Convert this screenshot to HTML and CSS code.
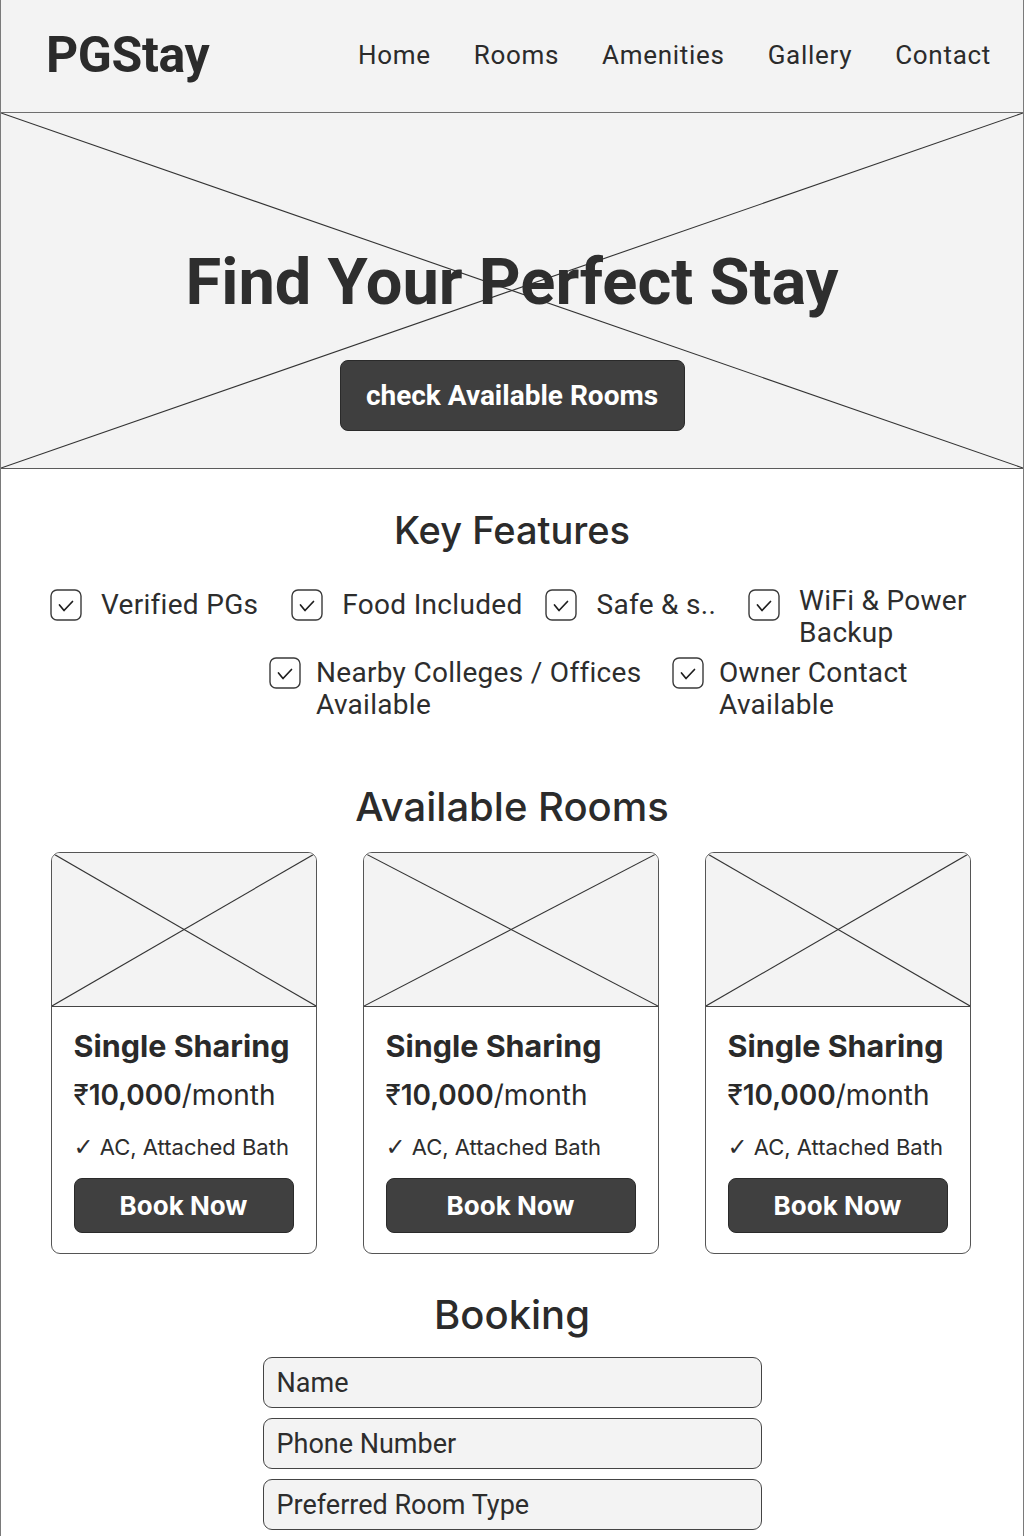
FILE: index.html
```html
<!DOCTYPE html>
<html lang="en">
<head>
<meta charset="utf-8">
<title>PGStay</title>
<link rel="stylesheet" href="styles.css">
</head>
<body>
<div class="page">
  <header class="topbar">
    <div class="logo">PGStay</div>
    <nav class="nav">
      <a href="#">Home</a>
      <a href="#">Rooms</a>
      <a href="#">Amenities</a>
      <a href="#">Gallery</a>
      <a href="#">Contact</a>
    </nav>
  </header>

  <section class="hero">
    <svg class="xlines" viewBox="0 0 100 100" preserveAspectRatio="none" aria-hidden="true">
      <line x1="0" y1="0" x2="100" y2="100"/>
      <line x1="100" y1="0" x2="0" y2="100"/>
    </svg>
    <h1 class="hero-title">Find Your Perfect Stay</h1>
    <a class="hero-btn" href="#">check Available Rooms</a>
  </section>

  <section class="features">
    <h2 class="section-title kf">Key Features</h2>
    <div class="feat-row row1">
      <div class="feat f-verified"><svg class="cb" viewBox="0 0 32 32"><rect x="1" y="1" width="30" height="30" rx="6"/><path d="M9.5 16 L14 21.5 L22.5 12.5"/></svg><span class="ft">Verified PGs</span></div>
      <div class="feat f-food"><svg class="cb" viewBox="0 0 32 32"><rect x="1" y="1" width="30" height="30" rx="6"/><path d="M9.5 16 L14 21.5 L22.5 12.5"/></svg><span class="ft">Food Included</span></div>
      <div class="feat f-safe"><svg class="cb" viewBox="0 0 32 32"><rect x="1" y="1" width="30" height="30" rx="6"/><path d="M9.5 16 L14 21.5 L22.5 12.5"/></svg><span class="ft">Safe &amp; s..</span></div>
      <div class="feat"><svg class="cb" viewBox="0 0 32 32"><rect x="1" y="1" width="30" height="30" rx="6"/><path d="M9.5 16 L14 21.5 L22.5 12.5"/></svg><span class="ft ft-wifi">WiFi &amp; Power Backup</span></div>
    </div>
    <div class="feat-row row2">
      <div class="feat tight"><svg class="cb" viewBox="0 0 32 32"><rect x="1" y="1" width="30" height="30" rx="6"/><path d="M9.5 16 L14 21.5 L22.5 12.5"/></svg><span class="ft ft-near">Nearby Colleges / Offices Available</span></div>
      <div class="feat tight"><svg class="cb" viewBox="0 0 32 32"><rect x="1" y="1" width="30" height="30" rx="6"/><path d="M9.5 16 L14 21.5 L22.5 12.5"/></svg><span class="ft ft-owner">Owner Contact Available</span></div>
    </div>
  </section>

  <section class="rooms">
    <h2 class="section-title">Available Rooms</h2>
    <div class="cards">
      <article class="card">
        <div class="card-img"><svg class="xlines" viewBox="0 0 100 100" preserveAspectRatio="none" aria-hidden="true"><line x1="0" y1="0" x2="100" y2="100"/><line x1="100" y1="0" x2="0" y2="100"/></svg></div>
        <div class="card-body">
          <h3 class="card-title">Single Sharing</h3>
          <p class="price">₹<b>10,000</b>/month</p>
          <p class="amen"><span class="tick">✓</span> AC, Attached Bath</p>
          <a class="book-btn" href="#">Book Now</a>
        </div>
      </article>
      <article class="card">
        <div class="card-img"><svg class="xlines" viewBox="0 0 100 100" preserveAspectRatio="none" aria-hidden="true"><line x1="0" y1="0" x2="100" y2="100"/><line x1="100" y1="0" x2="0" y2="100"/></svg></div>
        <div class="card-body">
          <h3 class="card-title">Single Sharing</h3>
          <p class="price">₹<b>10,000</b>/month</p>
          <p class="amen"><span class="tick">✓</span> AC, Attached Bath</p>
          <a class="book-btn" href="#">Book Now</a>
        </div>
      </article>
      <article class="card">
        <div class="card-img"><svg class="xlines" viewBox="0 0 100 100" preserveAspectRatio="none" aria-hidden="true"><line x1="0" y1="0" x2="100" y2="100"/><line x1="100" y1="0" x2="0" y2="100"/></svg></div>
        <div class="card-body">
          <h3 class="card-title">Single Sharing</h3>
          <p class="price">₹<b>10,000</b>/month</p>
          <p class="amen"><span class="tick">✓</span> AC, Attached Bath</p>
          <a class="book-btn" href="#">Book Now</a>
        </div>
      </article>
    </div>
  </section>

  <section class="booking">
    <h2 class="section-title">Booking</h2>
    <form class="form">
      <input class="field" type="text" placeholder="Name">
      <input class="field" type="text" placeholder="Phone Number">
      <input class="field" type="text" placeholder="Preferred Room Type">
    </form>
  </section>
</div>
</body>
</html>
```

FILE: styles.css
```css
* { box-sizing: border-box; }
html, body { margin: 0; padding: 0; background: #fff; }
body {
  font-family: Roboto, "Liberation Sans", Arial, sans-serif;
  color: #2d2d2d;
}
.page {
  width: 1024px;
  min-height: 1536px;
  border-left: 1.5px solid #7a7a7a;
  border-right: 1.5px solid #7a7a7a;
  background: #fff;
}

/* header */
.topbar {
  height: 113px;
  background: #f3f3f3;
  border-bottom: 1.5px solid #6e6e6e;
  display: flex;
  align-items: center;
  justify-content: space-between;
  padding: 0 32px 2px 45px;
}
.logo {
  font-family: Roboto, "Liberation Sans", sans-serif;
  font-weight: 700;
  font-size: 50px;
  letter-spacing: -0.4px;
  color: #2b2b2b;
}
.nav { display: flex; gap: 43px; }
.nav a {
  font-size: 26px;
  color: #2b2b2b;
  text-decoration: none;
  letter-spacing: 0.7px;
}

/* hero */
.hero {
  position: relative;
  height: 356px;
  background: #f3f3f3;
  border-bottom: 1.5px solid #5a5a5a;
  display: flex;
  flex-direction: column;
  align-items: center;
  padding-top: 129px;
}
.xlines {
  position: absolute;
  inset: 0;
  width: 100%;
  height: 100%;
}
.xlines line {
  stroke: #333;
  stroke-width: 1.1;
  vector-effect: non-scaling-stroke;
}
.hero-title {
  position: relative;
  margin: 0;
  font-size: 65px;
  line-height: 80px;
  font-weight: 700;
  color: #2e2e2e;
}
.hero-btn {
  position: relative;
  margin-top: 38px;
  width: 345px;
  height: 71px;
  background: #3f3f3f;
  border: 1.5px solid #2a2a2a;
  border-radius: 8px;
  color: #fff;
  font-size: 28px;
  font-weight: 700;
  text-decoration: none;
  display: flex;
  align-items: center;
  justify-content: center;
}

/* section titles */
.section-title {
  margin: 0;
  text-align: center;
  font-family: Inter, Roboto, sans-serif;
  font-weight: 500;
  font-size: 40px;
  line-height: 48px;
  color: #2b2b2b;
}
.section-title.kf { font-size: 38px; }

/* features */
.features { padding-top: 37px; }
.feat-row { display: flex; align-items: flex-start; }
.row1 { margin-top: 35px; padding-left: 49px; }
.row2 { margin-top: 8px; padding-left: 268px; gap: 29px; }
.feat { display: flex; align-items: flex-start; gap: 19px; }
.feat.tight { gap: 15px; }
.f-verified { margin-right: 33px; }
.f-food { margin-right: 23px; }
.f-safe { margin-right: 32px; }
.cb {
  width: 32px;
  height: 32px;
  flex: none;
}
.cb rect { fill: #fff; stroke: #3a3a3a; stroke-width: 1.4; }
.cb path { fill: none; stroke: #1e1e1e; stroke-width: 1.7; stroke-linecap: round; stroke-linejoin: round; }
.ft {
  font-size: 28px;
  line-height: 32px;
  letter-spacing: 0.3px;
  color: #2d2d2d;
}
.ft-wifi { width: 180px; margin-top: -4px; }
.ft-near { width: 327px; }
.ft-owner { width: 200px; }

/* rooms */
.rooms { padding-top: 62px; }
.cards {
  display: grid;
  grid-template-columns: 266px 296px 266px;
  gap: 46px;
  padding-left: 49.5px;
  margin-top: 21px;
}
.card {
  border: 1.5px solid #555;
  border-radius: 9px;
  overflow: hidden;
  background: #fff;
}
.card-img {
  position: relative;
  height: 154px;
  background: #f3f3f3;
  border-bottom: 1.5px solid #444;
}
.card-body {
  padding: 21px 22px 20px 22px;
  font-family: Inter, Roboto, sans-serif;
}
.card-title {
  margin: 0;
  font-size: 30.5px;
  line-height: 36px;
  font-weight: 700;
  color: #2a2a2a;
}
.price {
  margin: 14px 0 0;
  font-size: 28px;
  line-height: 34px;
  color: #2a2a2a;
}
.price b { font-weight: 600; }
.amen {
  margin: 20px 0 0;
  font-size: 22px;
  line-height: 30px;
  color: #2d2d2d;
  white-space: nowrap;
}
.tick {
  font-family: "DejaVu Sans", sans-serif;
  font-size: 24px;
  line-height: 20px;
}
.book-btn {
  margin-top: 16px;
  height: 55px;
  display: flex;
  align-items: center;
  justify-content: center;
  background: #404040;
  border: 1.5px solid #2a2a2a;
  border-radius: 8px;
  color: #fff;
  font-size: 26px;
  font-weight: 700;
  text-decoration: none;
}

/* booking */
.booking { padding-top: 37px; }
.form {
  margin: 18px 0 0;
  display: flex;
  flex-direction: column;
  align-items: center;
  gap: 10px;
}
.field {
  width: 499px;
  height: 51px;
  border: 1.5px solid #444;
  border-radius: 9px;
  background: #f3f3f3;
  padding: 0 13px;
  font-family: Roboto, sans-serif;
  font-size: 27px;
  color: #2d2d2d;
  outline: none;
}
.field::placeholder { color: #2d2d2d; opacity: 1; }
```
